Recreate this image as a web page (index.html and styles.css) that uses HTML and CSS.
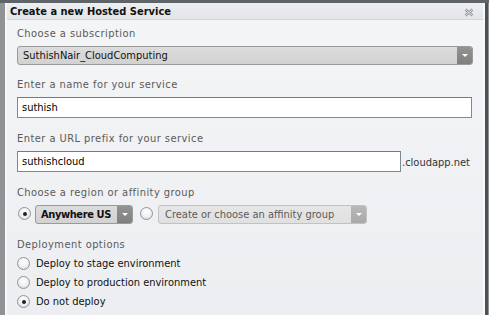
FILE: index.html
```html
<!DOCTYPE html>
<html>
<head>
<meta charset="utf-8">
<link rel="stylesheet" href="styles.css">
</head>
<body>
<div class="dialog">
  <div class="titlebar">
    <span class="title">Create a new Hosted Service</span>
    <svg class="close" width="10" height="9" viewBox="0 0 10 9">
      <path d="M1.5 1.5 L8.5 7.5 M8.5 1.5 L1.5 7.5" stroke="#8f9397" stroke-width="2.4" fill="none"/>
      <path d="M1.5 1.5 L8.5 7.5 M8.5 1.5 L1.5 7.5" stroke="#eceef0" stroke-width="0.9" fill="none"/>
    </svg>
  </div>
  <div class="content">
    <div class="field">
      <div class="label">Choose a subscription</div>
      <div class="dropdown wide">
        <span class="dd-text">SuthishNair_CloudComputing</span>
        <span class="dd-btn"><span class="tri"></span></span>
      </div>
    </div>
    <div class="field">
      <div class="label">Enter a name for your service</div>
      <div class="textbox wide">suthish</div>
    </div>
    <div class="field nudge">
      <div class="label">Enter a URL prefix for your service</div>
      <div class="url-row">
        <div class="textbox url">suthishcloud</div>
        <span class="suffix">.cloudapp.net</span>
      </div>
    </div>
    <div class="field nudge">
      <div class="label">Choose a region or affinity group</div>
      <div class="region-row">
        <span class="radio checked"></span>
        <div class="dropdown region">
          <span class="dd-text bold">Anywhere US</span>
          <span class="dd-btn"><span class="tri"></span></span>
        </div>
        <span class="radio second"></span>
        <div class="dropdown affinity disabled">
          <span class="dd-text">Create or choose an affinity group</span>
          <span class="dd-btn"><span class="tri"></span></span>
        </div>
      </div>
    </div>
    <div class="field deploy nudge">
      <div class="label">Deployment options</div>
      <div class="options">
        <div class="option"><span class="radio"></span><span class="opt-text">Deploy to stage environment</span></div>
        <div class="option"><span class="radio"></span><span class="opt-text">Deploy to production environment</span></div>
        <div class="option"><span class="radio checked"></span><span class="opt-text">Do not deploy</span></div>
      </div>
    </div>
  </div>
</div>
</body>
</html>
```

FILE: styles.css
```css
html, body {
  margin: 0;
  padding: 0;
  height: 100%;
}
body {
  background: linear-gradient(#5f6468 0, #5f6468 3px, #8f9396 3px);
  font-family: "DejaVu Sans Condensed", "DejaVu Sans", sans-serif;
  font-size: 11px;
  overflow: hidden;
}
.dialog {
  margin: 3px 0 0 5px;
  width: 480px;
  height: 312px;
  box-sizing: border-box;
  border-left: 2px solid #f7f8f9;
  border-right: 2px solid #f7f8f9;
  outline: 3px solid #4c5155;
  background: linear-gradient(#f4f5f7, #eceef1);
  display: flex;
  flex-direction: column;
  clip-path: inset(0 -3px 0 0);
}
.titlebar {
  height: 14px;
  border-bottom: 1px solid #d3d6d9;
  background: linear-gradient(#eceef0, #e3e5e8);
  display: flex;
  align-items: center;
  justify-content: space-between;
  padding: 2px 9px 0 3px;
}
.title {
  font-weight: bold;
  color: #111;
  line-height: 14px;
}
.content {
  padding: 7px 13px 0 10px;
  display: flex;
  flex-direction: column;
  gap: 13px;
}
.field {
  display: flex;
  flex-direction: column;
  gap: 5px;
}
.field.nudge {
  margin-top: 1px;
}
.label {
  color: #5a5a5a;
  line-height: 14px;
  letter-spacing: 0.45px;
}
.dropdown {
  box-sizing: border-box;
  height: 19px;
  border: 1px solid #9a9a9a;
  border-radius: 3px;
  background: linear-gradient(#dcdcdc, #d2d2d2);
  display: flex;
  align-items: center;
  justify-content: space-between;
  padding: 0 0 0 5px;
  color: #111;
}
.dropdown.wide {
  width: 456px;
}
.dd-text {
  line-height: 14px;
  white-space: nowrap;
}
.dd-text.bold {
  font-weight: bold;
  letter-spacing: -0.4px;
}
.dd-btn {
  width: 15px;
  height: 17px;
  background: linear-gradient(#939393, #7f7f7f);
  border-radius: 0 2px 2px 0;
  display: flex;
  align-items: center;
  justify-content: center;
  flex: none;
}
.tri {
  width: 0;
  height: 0;
  border-left: 3px solid transparent;
  border-right: 3px solid transparent;
  border-top: 3px solid #fff;
}
.textbox {
  box-sizing: border-box;
  height: 21px;
  border: 1px solid #7d8a96;
  border-top-color: #6f7b87;
  background: #fff;
  padding: 0 4px;
  line-height: 19px;
  color: #000;
}
.textbox.wide {
  width: 455px;
}
.url-row {
  display: flex;
  align-items: center;
}
.textbox.url {
  width: 388px;
}
.suffix {
  color: #333;
  margin-left: 1px;
  margin-top: 1px;
}
.region-row {
  display: flex;
  align-items: center;
  gap: 4px;
}
.radio {
  box-sizing: border-box;
  width: 13px;
  height: 13px;
  border-radius: 50%;
  border: 1px solid #8f959c;
  background: radial-gradient(circle at 50% 35%, #ffffff 0, #f0f1f2 50%, #cfd2d5 100%);
  display: inline-flex;
  align-items: center;
  justify-content: center;
  flex: none;
}
.radio.checked::after {
  content: "";
  width: 4px;
  height: 4px;
  border-radius: 50%;
  background: #222;
}
.region-row .radio {
  margin-left: 1px;
  margin-top: -2px;
}
.region-row .radio.second {
  margin-left: 3px;
}
.dropdown.region {
  width: 98px;
}
.dropdown.affinity {
  width: 209px;
  margin-left: 1px;
}
.dropdown.disabled {
  background: linear-gradient(#e6e6e6, #e0e0e0);
  border-color: #c2c2c2;
  color: #5a5a5a;
  padding-left: 6px;
}
.dropdown.disabled .dd-btn {
  background: linear-gradient(#b8b8b8, #a9a9a9);
}
.deploy {
  gap: 2px;
}
.options {
  display: flex;
  flex-direction: column;
}
.option {
  height: 19px;
  display: flex;
  align-items: center;
  gap: 6px;
  color: #111;
}
```
